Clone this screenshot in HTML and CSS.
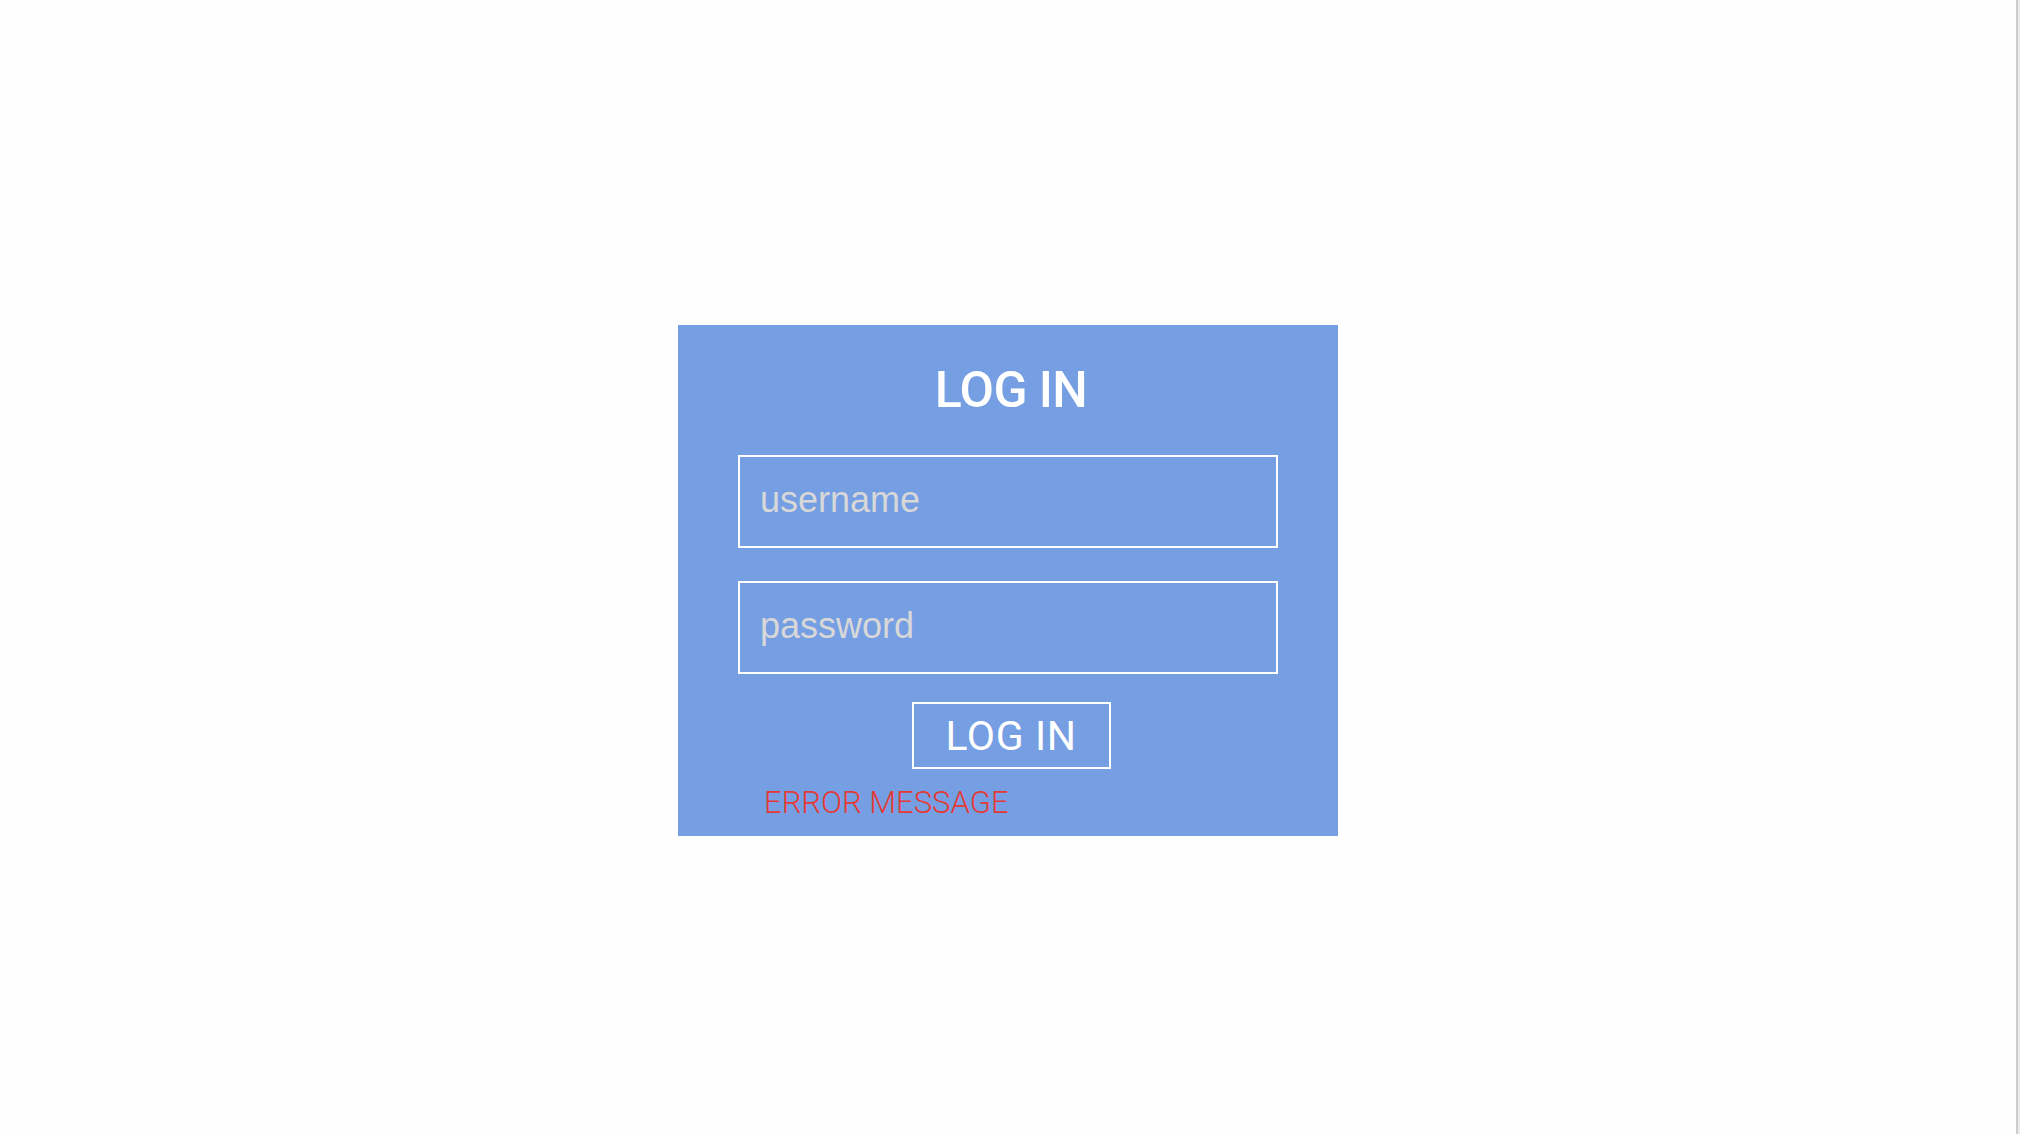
FILE: index.html
```html
<!DOCTYPE html>
<html lang="en">
<head>
<meta charset="utf-8">
<title>Log in</title>
<link rel="stylesheet" href="styles.css">
</head>
<body>
<div class="viewport">
  <main class="page">
    <form class="card" onsubmit="return false;">
      <h1 class="title">LOG IN</h1>
      <input class="field field-user" type="text" placeholder="username">
      <input class="field field-pass" type="password" placeholder="password">
      <button class="btn" type="submit">LOG IN</button>
      <p class="error">ERROR MESSAGE</p>
    </form>
  </main>
  <div class="rail"></div>
</div>
</body>
</html>
```

FILE: styles.css
```css
html, body {
  margin: 0;
  padding: 0;
  height: 100%;
  background: #ffffff;
}

.viewport {
  display: flex;
  height: 100%;
}

.page {
  flex: 1;
  display: flex;
  flex-direction: column;
  align-items: center;
  padding-top: 325px;
  box-sizing: border-box;
  background: #fefefe;
  border-right: 2px solid #cdcdcd;
}

.rail {
  width: 2px;
  background: #ebebeb;
}

.card {
  width: 660px;
  height: 511px;
  box-sizing: border-box;
  background: #769ee3;
  padding: 35px 60px 0;
  display: flex;
  flex-direction: column;
}

.title {
  margin: 0;
  font-family: Roboto, "Liberation Sans", sans-serif;
  font-weight: 500;
  font-size: 50px;
  letter-spacing: -0.6px;
  line-height: 61px;
  color: #ffffff;
  text-align: center;
  padding-left: 6px;
}

.field {
  display: block;
  width: 100%;
  height: 93px;
  box-sizing: border-box;
  border: 2px solid #ffffff;
  background: transparent;
  padding: 0 20px 4px;
  font-family: "Liberation Sans", Arial, sans-serif;
  font-size: 36px;
  color: #ffffff;
  outline: none;
}

.field::placeholder {
  color: #d8d8d8;
  opacity: 1;
}

.field-user {
  margin-top: 34px;
}

.field-pass {
  margin-top: 33px;
}

.btn {
  align-self: center;
  margin-top: 28px;
  margin-left: 6px;
  width: 199px;
  height: 67px;
  box-sizing: border-box;
  border: 2px solid #ffffff;
  background: transparent;
  color: #ffffff;
  font-family: Roboto, "Liberation Sans", sans-serif;
  font-weight: 400;
  font-size: 41px;
  letter-spacing: 0.6px;
  padding: 0;
  cursor: pointer;
}

.error {
  margin: 16px 0 0 26px;
  font-family: Roboto, "Liberation Sans", sans-serif;
  font-weight: 300;
  font-size: 31px;
  line-height: 36px;
  color: #e53935;
}
```
